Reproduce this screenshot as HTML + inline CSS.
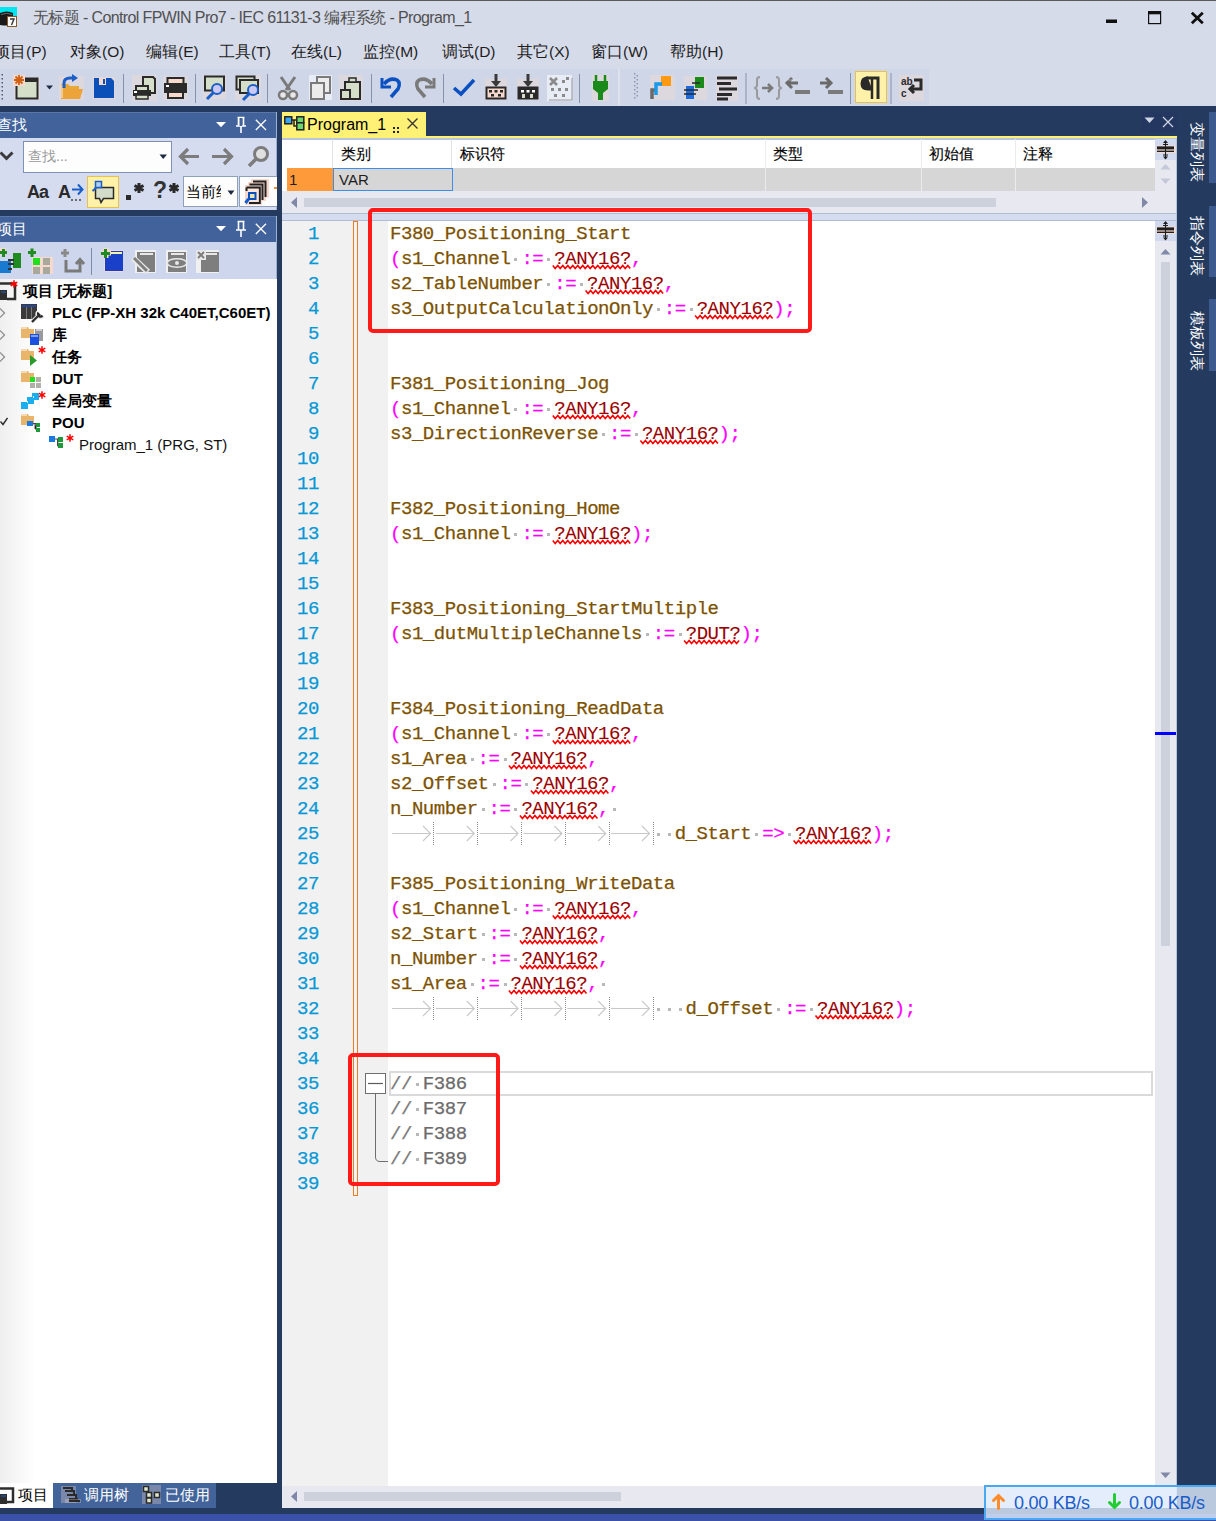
<!DOCTYPE html>
<html><head><meta charset="utf-8">
<style>
*{margin:0;padding:0;box-sizing:border-box}
html,body{width:1216px;height:1521px;overflow:hidden;background:#243a5e;font-family:"Liberation Sans",sans-serif;}
.a{position:absolute}
.ui{font-size:15px;color:#1e1e1e;white-space:nowrap;line-height:1}
.mn{font-size:15.5px;margin-top:1px}
.hd{color:#000;-webkit-text-stroke:0.15px #000}
#title{left:0;top:0;width:1216px;height:69px;background:#d6dbe9}
#tb{left:0;top:69px;width:1216px;height:37px;background:#d6dbe9}
.b{font-weight:bold;color:#000}
.tbar{background:#cfd6e8}
.sep{width:1px;background:#8a96b0}
.code{left:390px;font-family:"Liberation Mono",monospace;font-size:19px;letter-spacing:-0.45px;-webkit-text-stroke:0.25px currentColor;white-space:pre;line-height:25px;height:25px}
.id{color:#7d5200}.op{color:#ff00ff}.ph{color:#9a0000;-webkit-text-stroke:0.1px currentColor}
.ws{display:inline-block;width:10.95px;height:25px;vertical-align:top;position:relative;color:transparent}
.ws:after{content:"";position:absolute;left:4px;top:11px;width:3px;height:3px;background:#b8b8b8}
.tab{display:inline-block;width:43.8px;height:25px;vertical-align:top}
.cm{color:#7a7a7a}.cg{color:#6b6b6b}
.vt{font-size:15px;color:#fff;line-height:15px;white-space:nowrap;transform-origin:0 0;transform:rotate(90deg)}
.lnum{left:283px;width:36px;text-align:right;font-family:"Liberation Mono",monospace;font-size:19px;letter-spacing:-0.45px;-webkit-text-stroke:0.25px currentColor;line-height:25px;color:#0898d6}
</style></head><body>
<!-- title bar -->
<div id="title" class="a"></div>
<div class="a" style="left:0;top:0;width:1216px;height:1px;background:#5a5a5a"></div>
<div class="a ui" style="left:33px;top:10px;font-size:16px;color:#505050;letter-spacing:-0.62px">无标题 - Control FPWIN Pro7 - IEC 61131-3 编程系统 - Program_1</div>
<!-- menu -->
<div class="a ui mn" style="left:-6px;top:43px">项目(P)</div>
<div class="a ui mn" style="left:70px;top:43px">对象(O)</div>
<div class="a ui mn" style="left:146px;top:43px">编辑(E)</div>
<div class="a ui mn" style="left:219px;top:43px">工具(T)</div>
<div class="a ui mn" style="left:291px;top:43px">在线(L)</div>
<div class="a ui mn" style="left:363px;top:43px">监控(M)</div>
<div class="a ui mn" style="left:442px;top:43px">调试(D)</div>
<div class="a ui mn" style="left:517px;top:43px">其它(X)</div>
<div class="a ui mn" style="left:591px;top:43px">窗口(W)</div>
<div class="a ui mn" style="left:670px;top:43px">帮助(H)</div>
<!-- toolbar -->
<div id="tb" class="a"></div>
<div class="a tbar" style="left:0;top:69px;width:618px;height:36px"></div>
<div class="a tbar" style="left:620px;top:69px;width:309px;height:36px"></div>


<!-- toolbar icons -->
<svg class="a" style="left:0;top:69px" width="930" height="37">
<g fill="#4a5a7a">
<rect x="1.5" y="5" width="1.5" height="1.5"/><rect x="1.5" y="9" width="1.5" height="1.5"/><rect x="1.5" y="13" width="1.5" height="1.5"/><rect x="1.5" y="17" width="1.5" height="1.5"/><rect x="1.5" y="21" width="1.5" height="1.5"/><rect x="1.5" y="25" width="1.5" height="1.5"/><rect x="1.5" y="29" width="1.5" height="1.5"/>
</g>
<!-- new -->
<rect x="14" y="8" width="26" height="23" fill="#f6d9cc" opacity="0.35"/>
<rect x="16.5" y="9.5" width="21" height="20" fill="#d4dec8" stroke="#2a2a2a" stroke-width="2"/>
<rect x="24" y="9" width="14" height="4" fill="#2a2a2a"/>
<rect x="13" y="6" width="12" height="11" fill="#f6d9cc"/>
<path d="M19 6V16M14 11H24M15.5 7.5L22.5 14.5M22.5 7.5L15.5 14.5" stroke="#d06010" stroke-width="1.8"/>
<path d="M46 16.5H53L49.5 20.5Z" fill="#1e2a44"/>
<!-- open -->
<rect x="59" y="7" width="25" height="24" fill="#f6d9cc" opacity="0.35"/>
<path d="M61 15H68L70 17H79V30H61Z" fill="#e8a838"/>
<path d="M61 20H83L80 30H61Z" fill="#eba33a"/>
<path d="M62 16V29" stroke="#f8d8a8" stroke-width="1.5"/>
<path d="M64 19V14Q64 9 70 9H74" stroke="#1a5fc8" stroke-width="3" fill="none"/>
<path d="M72 5L78 9L72 13Z" fill="#1a5fc8"/>
<!-- save -->
<rect x="93" y="8" width="22" height="22" fill="#f6d9cc" opacity="0.35"/>
<path d="M94 9H111L114 12V29H94Z" fill="#0a50b8"/>
<rect x="99" y="9" width="7" height="7" fill="#f6d9cc"/><rect x="103" y="10" width="2" height="5" fill="#0a50b8"/>
<!-- sep -->
<path d="M123.5 5V34" stroke="#8592ad" stroke-width="1"/>
<!-- print preview -->
<rect x="132" y="6" width="25" height="26" fill="#f6d9cc" opacity="0.35"/>
<path d="M143 8H153L155 10V24H143Z" fill="#d4dec8" stroke="#2a2a2a" stroke-width="2"/>
<rect x="136" y="17" width="12" height="6" fill="#d4dec8" stroke="#2a2a2a" stroke-width="2"/>
<rect x="133" y="21" width="18" height="6" fill="#2a2a2a"/><rect x="134" y="22" width="3" height="2" fill="#fff"/>
<rect x="136" y="26" width="12" height="4" fill="#d4dec8" stroke="#2a2a2a" stroke-width="1.5"/>
<!-- print -->
<rect x="163" y="7" width="25" height="24" fill="#f6d9cc" opacity="0.35"/>
<rect x="167.5" y="9" width="16" height="6" fill="#f6d9cc" stroke="#2a2a2a" stroke-width="2"/>
<rect x="164" y="14" width="23" height="10" fill="#2a2a2a"/><rect x="166" y="16" width="3" height="2" fill="#fff"/>
<rect x="168" y="23" width="15" height="6" fill="#f6d9cc" stroke="#2a2a2a" stroke-width="2"/>
<path d="M195.5 5V34" stroke="#8592ad" stroke-width="1"/>
<!-- find -->
<rect x="203" y="6" width="23" height="24" fill="#f6d9cc" opacity="0.35"/>
<rect x="205" y="7.5" width="19" height="14" fill="#d4dec8" stroke="#2a2a2a" stroke-width="2"/>
<circle cx="217" cy="20" r="5" fill="#ccc8f4" stroke="#1a5fc8" stroke-width="2"/>
<path d="M213.5 23.5L207 30" stroke="#1a5fc8" stroke-width="3"/>
<!-- find multi -->
<rect x="235" y="6" width="26" height="25" fill="#f6d9cc" opacity="0.35"/>
<rect x="236.5" y="7.5" width="18" height="13" fill="#d4dec8" stroke="#2a2a2a" stroke-width="2"/>
<rect x="240" y="11" width="18" height="13" fill="#d4dec8" stroke="#2a2a2a" stroke-width="2"/>
<circle cx="253" cy="21" r="5" fill="#ccc8f4" stroke="#1a5fc8" stroke-width="2"/>
<path d="M249.5 24.5L243 31" stroke="#1a5fc8" stroke-width="3"/>
<path d="M267.5 5V34" stroke="#8592ad" stroke-width="1"/>
<!-- cut -->
<path d="M281 8L290 21M295 8L286 21" stroke="#7a7a7a" stroke-width="3"/>
<circle cx="283" cy="26" r="4" fill="#e8e8e8" stroke="#7a7a7a" stroke-width="2.5"/>
<circle cx="293" cy="26" r="4" fill="#e8e8e8" stroke="#7a7a7a" stroke-width="2.5"/>
<!-- copy -->
<rect x="309" y="6" width="23" height="25" fill="#e8ecf4"/>
<rect x="317" y="8" width="13" height="16" fill="#ececec" stroke="#7a7a7a" stroke-width="2"/>
<rect x="311" y="14" width="13" height="16" fill="#ececec" stroke="#7a7a7a" stroke-width="2"/>
<!-- paste -->
<rect x="339" y="6" width="24" height="26" fill="#f6d9cc" opacity="0.35"/>
<rect x="345" y="13" width="15" height="17" fill="#d4dec8" stroke="#2a2a2a" stroke-width="2"/>
<rect x="349" y="9" width="7" height="4" fill="#d4dec8" stroke="#2a2a2a" stroke-width="1.5"/>
<rect x="341" y="21" width="9" height="9" fill="#d4dec8" stroke="#2a2a2a" stroke-width="2"/>
<path d="M371.5 5V34" stroke="#8592ad" stroke-width="1"/>
<!-- undo -->
<path d="M384 15Q390 8 397 11Q401 14 398 20L391 28" stroke="#0a50c0" stroke-width="3.5" fill="none"/>
<path d="M382 9V18H391" stroke="#0a50c0" stroke-width="3" fill="none"/>
<!-- redo -->
<path d="M432 15Q426 8 419 11Q415 14 418 20L425 28" stroke="#7a7a7a" stroke-width="3.5" fill="none"/>
<path d="M434 9V18H425" stroke="#7a7a7a" stroke-width="3" fill="none"/>
<path d="M443.5 5V34" stroke="#8592ad" stroke-width="1"/>
<!-- check -->
<path d="M454 19L461 25L474 11" stroke="#0a50c0" stroke-width="3.5" fill="none"/>
<!-- download -->
<rect x="485" y="10" width="22" height="21" fill="#f6d9cc" opacity="0.35"/>
<rect x="486.5" y="18.5" width="19" height="11" fill="#f6d9cc" stroke="#2a2a2a" stroke-width="2"/>
<path d="M496 5V14" stroke="#3a3a3a" stroke-width="3"/><path d="M491 12H501L496 18Z" fill="#3a3a3a"/>
<rect x="489" y="21" width="3" height="2.5" fill="#2a2a2a"/><rect x="494.5" y="21" width="3" height="2.5" fill="#2a2a2a"/><rect x="500" y="21" width="3" height="2.5" fill="#2a2a2a"/>
<rect x="491" y="25" width="3" height="2.5" fill="#2a2a2a"/><rect x="498" y="25" width="3" height="2.5" fill="#2a2a2a"/>
<!-- download2 -->
<rect x="517" y="10" width="22" height="21" fill="#f6d9cc" opacity="0.35"/>
<rect x="518.5" y="18.5" width="19" height="11" fill="#2a2a2a" stroke="#2a2a2a" stroke-width="2"/>
<path d="M528 5V14" stroke="#3a3a3a" stroke-width="3"/><path d="M523 12H533L528 18Z" fill="#3a3a3a"/>
<rect x="521" y="21" width="3" height="2.5" fill="#fff"/><rect x="526.5" y="21" width="3" height="2.5" fill="#fff"/><rect x="532" y="21" width="3" height="2.5" fill="#fff"/>
<rect x="522" y="25" width="3" height="4" fill="#d4dec8"/><rect x="530" y="25" width="3" height="4" fill="#d4dec8"/>
<!-- grid -->
<rect x="547" y="6" width="25" height="26" fill="#e8ecf4"/>
<path d="M550 9L557 16M557 9L550 16" stroke="#8a8a8a" stroke-width="2.5"/>
<g fill="#8a8a8a"><rect x="562" y="11" width="3" height="3"/><rect x="566" y="8" width="3" height="3"/><rect x="551" y="19" width="3" height="3"/><rect x="558" y="19" width="3" height="3"/><rect x="565" y="19" width="3" height="3"/><rect x="554" y="25" width="3" height="3"/><rect x="562" y="25" width="3" height="3"/></g>
<path d="M549 31H572V9" stroke="#9a9a9a" stroke-width="1" fill="none"/>
<path d="M579.5 5V34" stroke="#8592ad" stroke-width="1"/>
<!-- plug -->
<rect x="592" y="6" width="17" height="26" fill="#f6d9cc" opacity="0.35"/>
<path d="M596 6V12M605 6V12" stroke="#1a8a1a" stroke-width="2.5"/>
<path d="M593 12H608V20L603 24V31H598V24L593 20Z" fill="#1a8a1a"/>
</svg>
<div class="a" style="left:618px;top:69px;width:2px;height:36px;background:#dde2ef"></div>
<svg class="a" style="left:620px;top:69px" width="310" height="37">
<g fill="#8a96b0"><rect x="14" y="4" width="1.5" height="1.5"/><rect x="14" y="8" width="1.5" height="1.5"/><rect x="14" y="12" width="1.5" height="1.5"/><rect x="14" y="16" width="1.5" height="1.5"/><rect x="14" y="20" width="1.5" height="1.5"/><rect x="14" y="24" width="1.5" height="1.5"/><rect x="14" y="28" width="1.5" height="1.5"/>
<rect x="16.5" y="6" width="1.5" height="1.5"/><rect x="16.5" y="10" width="1.5" height="1.5"/><rect x="16.5" y="14" width="1.5" height="1.5"/><rect x="16.5" y="18" width="1.5" height="1.5"/><rect x="16.5" y="22" width="1.5" height="1.5"/><rect x="16.5" y="26" width="1.5" height="1.5"/></g>
<!-- icon 27 -->
<rect x="30" y="6" width="25" height="25" fill="#f6d9cc" opacity="0.35"/>
<rect x="41" y="7" width="10" height="10" fill="#ff9a10"/>
<path d="M32 30V21H37" stroke="#6a6a6a" stroke-width="3.5" fill="none"/>
<path d="M36 26V15H42" stroke="#1a9ae8" stroke-width="3.5" fill="none"/>
<!-- icon 28 -->
<rect x="64" y="7" width="23" height="24" fill="#f6d9cc" opacity="0.35"/>
<rect x="75" y="8" width="9" height="11" fill="#1a8a1a"/>
<rect x="66" y="17" width="8" height="13" fill="#1a6ae0"/>
<path d="M64 21H78M64 25H76M72 14H80" stroke="#2a2a2a" stroke-width="1.5"/>
<!-- icon 29 -->
<rect x="96" y="6" width="22" height="26" fill="#f6d9cc" opacity="0.35"/>
<path d="M97 9H117M97 14.5H111M99 20H117M97 25.5H112M97 30H108" stroke="#2a2a2a" stroke-width="3"/>
<path d="M126 4V35" stroke="#8592ad" stroke-width="1"/>
<!-- {→} -->
<path d="M140 8Q137 8 137 11V17L135 19L137 21V27Q137 30 140 30" stroke="#9a9a9a" stroke-width="2" fill="none"/>
<path d="M156 8Q159 8 159 11V17L161 19L159 21V27Q159 30 156 30" stroke="#9a9a9a" stroke-width="2" fill="none"/>
<path d="M142 19H151M148 15L152 19L148 23" stroke="#7a7a7a" stroke-width="2.5" fill="none"/>
<!-- ←_ -->
<path d="M167 14H178M172 9L167 14L172 19" stroke="#6a6a6a" stroke-width="3" fill="none"/>
<rect x="175" y="21" width="15" height="4" fill="#7a7a7a"/>
<path d="M168 11H180" stroke="#e8e8e8" stroke-width="1" opacity="0.5"/>
<!-- →_ -->
<path d="M200 14H211M206 9L211 14L206 19" stroke="#6a6a6a" stroke-width="3" fill="none"/>
<rect x="208" y="21" width="15" height="4" fill="#7a7a7a"/>
<path d="M230.5 4V35" stroke="#8592ad" stroke-width="1"/>
<!-- ¶ highlighted -->
<rect x="235.5" y="2.5" width="31" height="31" fill="#fff2a8" stroke="#e9c14f" stroke-width="1"/>
<path d="M246 9H258V30" stroke="#2a2a2a" stroke-width="3" fill="none"/>
<path d="M252 9V30" stroke="#2a2a2a" stroke-width="2.5"/>
<path d="M248 9Q242 9 242 14.5Q242 20 248 20H252" fill="#2a2a2a" stroke="#2a2a2a" stroke-width="3"/>
<path d="M271 4V35" stroke="#8592ad" stroke-width="1"/>
<!-- abc -->
<rect x="279" y="6" width="25" height="26" fill="#f6d9cc" opacity="0.35"/>
<text x="281" y="16" font-family="Liberation Sans" font-weight="bold" font-size="10" fill="#2a2a2a">ab</text>
<text x="281" y="28" font-family="Liberation Sans" font-weight="bold" font-size="10" fill="#2a2a2a">c</text>
<path d="M294 11H301V20H290M294 16L290 20L294 24" stroke="#2a2a2a" stroke-width="3" fill="none"/>
</svg>
<!-- left panel: find -->
<div class="a" style="left:0;top:112px;width:277px;height:26px;background:#41629a"></div>
<div class="a" style="left:0;top:112px;width:277px;height:1px;background:#5a77a8"></div>
<div class="a ui" style="left:-3px;top:117px;color:#fff">查找</div>
<svg class="a" style="left:214px;top:120px" width="14" height="10"><path d="M2 2H12L7 7.2Z" fill="#fff"/></svg>
<svg class="a" style="left:234px;top:116px" width="14" height="18"><path d="M3.5 1.5H10.5M4.5 1.5V9.5M9.5 1.5V9.5M2 10H12M7 10V17" stroke="#fff" stroke-width="1.6" fill="none"/><rect x="5" y="2" width="3" height="8" fill="#41629a"/><path d="M5 2V10" stroke="#fff" stroke-width="1"/></svg>
<svg class="a" style="left:255px;top:119px" width="12" height="12"><path d="M0.8 0.8L11 11M11 0.8L0.8 11" stroke="#fff" stroke-width="1.3"/></svg>
<div class="a" style="left:0;top:138px;width:277px;height:72px;background:#d5dcf0"></div>
<div class="a" style="left:276px;top:112px;width:1px;height:98px;background:#9db0d0"></div>
<svg class="a" style="left:0;top:150px" width="14" height="12"><path d="M0.5 2.5L6.5 8.5L12.5 2.5" stroke="#3a3a3a" stroke-width="3" fill="none"/></svg>
<div class="a" style="left:23px;top:141px;width:149px;height:32px;background:#fdfdfd;border:1px solid #7f92b2"></div>
<div class="a ui" style="left:28px;top:149px;color:#9a9a9a;font-size:14px">查找...</div>
<svg class="a" style="left:159px;top:154px" width="9" height="6"><path d="M0.5 0.5H8L4.2 5Z" fill="#1e2a44"/></svg>
<svg class="a" style="left:176px;top:146px" width="26" height="22"><path d="M23 10.5H5M12 3L4.5 10.5L12 18" stroke="#7c7c7c" stroke-width="3.2" fill="none"/></svg>
<svg class="a" style="left:210px;top:146px" width="26" height="22"><path d="M2 10.5H21M14 3L21.5 10.5L14 18" stroke="#7c7c7c" stroke-width="3.2" fill="none"/></svg>
<svg class="a" style="left:246px;top:145px" width="25" height="24"><circle cx="15" cy="9" r="6.5" stroke="#7c7c7c" stroke-width="3" fill="#e0e0e0"/><path d="M10 14L3 21" stroke="#7c7c7c" stroke-width="3.5"/></svg>
<!-- row2 -->
<div class="a" style="left:27px;top:183px;font:bold 18px 'Liberation Sans',sans-serif;color:#2a2a2a;letter-spacing:-1px;line-height:1">Aa</div>
<div class="a" style="left:58px;top:183px;font:bold 18px 'Liberation Sans',sans-serif;color:#2a2a2a;line-height:1">A</div>
<svg class="a" style="left:70px;top:181px" width="16" height="22"><path d="M2 8.5H12M8 3.5L12.5 8.5L8 13.5" stroke="#1a5fc8" stroke-width="2" fill="none"/><path d="M1 19H3M5 19H7M9 19H11" stroke="#444" stroke-width="1.5"/></svg>
<div class="a" style="left:87px;top:176px;width:32px;height:32px;background:#fff2a8;border:1px solid #e9c14f"></div>
<svg class="a" style="left:91px;top:180px" width="26" height="25"><path d="M4.5 7.5H22.5V18.5H12.5L10 22.5L8.5 18.5H4.5Z" fill="#d3dcc8" stroke="#2a2a2a" stroke-width="1.5"/><rect x="4.5" y="1.5" width="6" height="6" fill="#b0d0f0" stroke="#1a5fc8" stroke-width="1.5"/><path d="M5 8L1.5 11" stroke="#1a5fc8" stroke-width="2"/></svg>
<svg class="a" style="left:124px;top:180px" width="24" height="24"><rect x="2" y="15" width="5" height="5" fill="#2a2a2a"/><path d="M15 3V13M10.5 5.5L19.5 10.5M19.5 5.5L10.5 10.5" stroke="#2a2a2a" stroke-width="3"/></svg>
<div class="a" style="left:153px;top:179px;font:bold 23px 'Liberation Sans',sans-serif;color:#333;line-height:1">?</div>
<svg class="a" style="left:165px;top:180px" width="20" height="20"><path d="M9 3V13M4.5 5.5L13.5 10.5M13.5 5.5L4.5 10.5" stroke="#2a2a2a" stroke-width="3"/></svg>
<div class="a" style="left:183px;top:176px;width:55px;height:31px;background:#fdfdfd;border:1px solid #8fa0bd;overflow:hidden"><div class="ui" style="position:absolute;left:2px;top:7px;color:#000;font-size:15px">当前组</div><div style="position:absolute;left:37px;top:0;width:17px;height:29px;background:#fdfdfd"></div></div>
<svg class="a" style="left:227px;top:190px" width="8" height="6"><path d="M0.5 0.5H7.5L4 5Z" fill="#1e2a44"/></svg>
<div class="a" style="left:239px;top:176px;width:38px;height:31px;background:#fdfdfd;border:1px solid #8fa0bd;border-right:none"></div>
<svg class="a" style="left:243px;top:178px" width="28" height="28">
<rect x="8" y="1" width="18" height="18.5" fill="#f6d9cc"/><rect x="5" y="4" width="18" height="19" fill="#f6d9cc"/><rect x="2" y="7" width="17" height="20" fill="#f6d9cc"/>
<path d="M10 3.5H22.5V19" stroke="#222" stroke-width="2" fill="none"/>
<path d="M6.5 6.5H19.5V22" stroke="#222" stroke-width="2" fill="none"/>
<path d="M3.5 9.5H16.8V25H6" stroke="#222" stroke-width="2" fill="none"/><path d="M3.5 9.5V13" stroke="#222" stroke-width="2"/>
<rect x="5" y="11" width="10.5" height="13" fill="#fbe6dc"/>
<rect x="6" y="15" width="6.5" height="6" fill="#e4e8b0" stroke="#0a4fc0" stroke-width="2"/>
<path d="M5.5 21L2.5 25" stroke="#0a5fd0" stroke-width="3"/>
</svg>
<div class="a" style="left:274px;top:187px;width:3px;height:2px;background:#f0902a"></div>

<!-- left panel: project -->
<div class="a" style="left:0;top:216px;width:277px;height:26px;background:#41629a"></div>
<div class="a" style="left:0;top:216px;width:277px;height:1px;background:#5a77a8"></div>
<div class="a ui" style="left:-3px;top:221px;color:#fff">项目</div>
<svg class="a" style="left:214px;top:224px" width="14" height="10"><path d="M2 2H12L7 7.2Z" fill="#fff"/></svg>
<svg class="a" style="left:234px;top:220px" width="14" height="18"><path d="M3.5 1.5H10.5M4.5 1.5V9.5M9.5 1.5V9.5M2 10H12M7 10V17" stroke="#fff" stroke-width="1.6" fill="none"/></svg>
<svg class="a" style="left:255px;top:223px" width="12" height="12"><path d="M0.8 0.8L11 11M11 0.8L0.8 11" stroke="#fff" stroke-width="1.3"/></svg>
<div class="a" style="left:0;top:242px;width:277px;height:37px;background:#cdd6ec"></div>
<div class="a" style="left:276px;top:216px;width:1px;height:63px;background:#9db0d0"></div>
<svg class="a" style="left:0;top:248px" width="222" height="27">
 <!-- 1 -->
 <path d="M0 3H6M3 0V7" stroke="#f6d9cc" stroke-width="5"/>
 <path d="M0 4.5H7M3.5 1V9" stroke="#1f8a1f" stroke-width="3"/>
 <rect x="0" y="13" width="11" height="12" fill="#1a7ad0"/><rect x="13" y="5" width="8" height="15" fill="#1f8a1f"/>
 <path d="M8 12H14M8 16H14M8 21H12" stroke="#333" stroke-width="2"/>
 <!-- 2 -->
 <path d="M28 4.5H36M32 0.5V9" stroke="#1f8a1f" stroke-width="3"/>
 <rect x="32" y="9" width="21" height="17" fill="#f6d9cc"/>
 <rect x="33" y="10" width="7" height="7" fill="#1fe01f"/><rect x="43" y="10" width="7" height="7" fill="#a8a89c"/><rect x="33" y="19" width="7" height="7" fill="#a8a89c"/><rect x="43" y="19" width="7" height="7" fill="#a8a89c"/>
 <!-- 3 -->
 <path d="M61 5H69M65 1V9" stroke="#8a8a8a" stroke-width="3"/>
 <path d="M66 12V23H80V13M76 16L80 11.5L84 16" stroke="#7a7a7a" stroke-width="3" fill="none"/>
 <!-- sep -->
 <path d="M91.5 0V27" stroke="#7d8aa6" stroke-width="1"/>
 <!-- 4 -->
 <rect x="104" y="2" width="19" height="22" fill="#f6d9cc"/>
 <rect x="105" y="3" width="18" height="20" fill="#1a3fc8"/><path d="M110 5H122" stroke="#f0f0b0" stroke-width="2"/>
 <path d="M101 5H111M106 0V10" stroke="#f6d9cc" stroke-width="5"/>
 <path d="M101 5.5H110M105.5 1V10" stroke="#1f8a1f" stroke-width="3"/>
 <!-- 5 -->
 <rect x="135" y="2" width="21" height="23" fill="#f0f0f0"/><rect x="137" y="4" width="18" height="20" fill="#7e7e7e"/><path d="M140 6H153" stroke="#e8e8e8" stroke-width="2"/>
 <path d="M133 10L148 24" stroke="#e8e8e8" stroke-width="6"/><path d="M134 10L147 23" stroke="#7e7e7e" stroke-width="3"/>
 <!-- 6 -->
 <rect x="166" y="2" width="21" height="23" fill="#f0f0f0"/><rect x="168" y="4" width="18" height="20" fill="#7e7e7e"/><path d="M171 6H184" stroke="#e8e8e8" stroke-width="2"/>
 <ellipse cx="177" cy="15" rx="11" ry="5" fill="#e8e8e8"/><ellipse cx="177" cy="15" rx="9" ry="3.5" fill="#7e7e7e"/><circle cx="177" cy="15" r="2" fill="#e8e8e8"/>
 <!-- 7 -->
 <rect x="196" y="2" width="23" height="23" fill="#f0f0f0"/><rect x="201" y="4" width="18" height="20" fill="#7e7e7e"/><path d="M204 6H217" stroke="#e8e8e8" stroke-width="2"/>
 <rect x="196" y="2" width="10" height="10" fill="#e8e8e8"/><path d="M198 4L204 10M204 4L198 10" stroke="#7e7e7e" stroke-width="2"/>
</svg>
<div class="a" style="left:0;top:279px;width:277px;height:1204px;background:#fff"></div>
<div class="a" style="left:0;top:279px;width:36px;height:1204px;background:linear-gradient(90deg,#efefef,#fff)"></div>
<div class="a" style="left:276px;top:279px;width:1px;height:1204px;background:#fff"></div>
<!-- tree -->
<svg class="a" style="left:0;top:281px" width="20" height="20"><path d="M0 2.5H15V18H7" stroke="#2e2e2e" stroke-width="2.5" fill="none"/><rect x="0" y="9" width="7" height="10" fill="#2e2e2e"/><path d="M1 11H6" stroke="#1a5fc8" stroke-width="1"/></svg>
<!-- asterisks --><svg class="a" style="left:9px;top:279px" width="10" height="10"><path d="M5 1.2V8.8M1.7 3.1L8.3 6.9M8.3 3.1L1.7 6.9" stroke="#ff0000" stroke-width="1.5"/></svg><svg class="a" style="left:37px;top:345px" width="10" height="10"><path d="M5 1.2V8.8M1.7 3.1L8.3 6.9M8.3 3.1L1.7 6.9" stroke="#ff0000" stroke-width="1.5"/></svg><svg class="a" style="left:37px;top:390px" width="10" height="10"><path d="M5 1.2V8.8M1.7 3.1L8.3 6.9M8.3 3.1L1.7 6.9" stroke="#ff0000" stroke-width="1.5"/></svg><svg class="a" style="left:65px;top:433px" width="10" height="10"><path d="M5 1.2V8.8M1.7 3.1L8.3 6.9M8.3 3.1L1.7 6.9" stroke="#ff0000" stroke-width="1.5"/></svg>
<div class="a ui b" style="left:23px;top:283px">项目 [无标题]</div>
<svg class="a" style="left:0;top:307px" width="6" height="12"><path d="M0 1.5L4.5 6L0 10.5" stroke="#8a8a8a" stroke-width="1.2" fill="none"/></svg>
<svg class="a" style="left:0;top:329px" width="6" height="12"><path d="M0 1.5L4.5 6L0 10.5" stroke="#8a8a8a" stroke-width="1.2" fill="none"/></svg>
<svg class="a" style="left:0;top:351px" width="6" height="12"><path d="M0 1.5L4.5 6L0 10.5" stroke="#8a8a8a" stroke-width="1.2" fill="none"/></svg>
<svg class="a" style="left:0;top:415px" width="8" height="12"><path d="M0.5 6.5L3 9.5L7.5 3" stroke="#2a2a2a" stroke-width="1.4" fill="none"/></svg>
<!-- PLC icon -->
<svg class="a" style="left:21px;top:304px" width="24" height="19"><rect x="0" y="0" width="16" height="15" fill="#3a3a3a"/><path d="M1 2H15" stroke="#1a4fe0" stroke-width="1.2"/><path d="M5.5 3V15M10.5 3V15" stroke="#7a7a7a" stroke-width="1"/><path d="M11 18L19 10M17 8A3 3 0 1 0 22 12" stroke="#e8e8e8" stroke-width="4" fill="none"/><path d="M11 18L19 10M17.5 8.5A2.5 2.5 0 1 0 21.5 11.5" stroke="#2a2a2a" stroke-width="2.2" fill="none"/></svg>
<div class="a ui b" style="left:52px;top:305px">PLC (FP-XH 32k C40ET,C60ET)</div>
<!-- lib icon -->
<svg class="a" style="left:21px;top:326px" width="24" height="19"><path d="M0 1H7L8 3H13V12H0Z" fill="#e8b56a"/><path d="M0 2H6" stroke="#fff" stroke-width="1"/><rect x="14" y="3" width="8" height="12" fill="#9a9a9a"/><path d="M15 4H21" stroke="#e0e0e0" stroke-width="1.5"/><rect x="9" y="8" width="9" height="11" fill="#1a4fe0"/><path d="M10 10H17" stroke="#c8d4f8" stroke-width="1.2"/></svg>
<div class="a ui b" style="left:52px;top:327px">库</div>
<!-- task icon -->
<svg class="a" style="left:21px;top:348px" width="26" height="20"><path d="M0 1H7L8 3H13V12H0Z" fill="#e8b56a"/><path d="M0 2H6" stroke="#fff" stroke-width="1"/><path d="M9 7L16 12.5L9 18Z" fill="#2a9a2a"/></svg>
<div class="a ui b" style="left:52px;top:349px">任务</div>
<!-- DUT icon -->
<svg class="a" style="left:21px;top:370px" width="24" height="19"><path d="M0 1H7L8 3H13V12H0Z" fill="#e8b56a"/><path d="M0 2H6" stroke="#fff" stroke-width="1"/><rect x="9" y="7" width="5" height="5" fill="#1fe01f"/><rect x="15" y="7" width="5" height="5" fill="#b0b0a8"/><rect x="9" y="13" width="5" height="5" fill="#b0b0a8"/><rect x="15" y="13" width="5" height="5" fill="#b0b0a8"/></svg>
<div class="a ui b" style="left:52px;top:371px">DUT</div>
<!-- global var icon -->
<svg class="a" style="left:21px;top:391px" width="26" height="20"><rect x="0" y="11" width="7" height="7" fill="#1aaef0"/><rect x="6" y="6" width="7" height="7" fill="#1aaef0"/><rect x="11" y="2" width="7" height="7" fill="#1aaef0"/><path d="M6 11H7M12 6H13" stroke="#fff" stroke-width="1.5"/></svg>
<div class="a ui b" style="left:52px;top:393px">全局变量</div>
<!-- POU icon -->
<svg class="a" style="left:21px;top:413px" width="24" height="19"><path d="M0 1H7L8 3H13V12H0Z" fill="#e8b56a"/><path d="M0 2H6" stroke="#fff" stroke-width="1"/><rect x="6" y="8" width="6" height="5" fill="#1a7ae0"/><path d="M12 10.5H15M14 10.5V16H16" stroke="#444" stroke-width="1"/><rect x="15" y="10" width="4" height="4" fill="#1f9a3a"/><rect x="15" y="15" width="4" height="4" fill="#1f9a3a"/></svg>
<div class="a ui b" style="left:52px;top:415px">POU</div>
<!-- Program icon -->
<svg class="a" style="left:49px;top:434px" width="26" height="20"><rect x="0" y="2" width="6" height="6" fill="#1a7ae0"/><path d="M6 5H9M8.5 5V12H10" stroke="#444" stroke-width="1"/><rect x="9" y="3" width="5" height="5" fill="#1f9a3a"/><rect x="9" y="9" width="5" height="5" fill="#1f9a3a"/></svg>
<div class="a ui" style="left:79px;top:437px;color:#111">Program_1 (PRG, ST)</div>

<!-- bottom tabs -->
<div class="a" style="left:0;top:1483px;width:53px;height:25px;background:#fff"></div>
<div class="a" style="left:53px;top:1483px;width:163px;height:25px;background:#43649b"></div>
<div class="a" style="left:0;top:1514px;width:1216px;height:7px;background:#3b50a8"></div>



<!-- title icon & controls -->
<svg class="a" style="left:0;top:7px" width="18" height="21"><rect x="0" y="0" width="17" height="9" fill="#00e5ee"/><rect x="13" y="0" width="4" height="19" fill="#00e5ee"/><path d="M0 6Q7 3 13 6V18Q7 19 0 18Z" fill="#1a1a1a"/><path d="M1 7.5Q7 5 12 7.5" stroke="#6a6a6a" stroke-width="1" fill="none"/><rect x="7.5" y="9.5" width="9" height="10" fill="#fafafa" stroke="#8a5a2a" stroke-width="1"/><path d="M10 12H14L11.5 18" stroke="#333" stroke-width="1.4" fill="none"/></svg>
<svg class="a" style="left:1106px;top:19px" width="12" height="5"><rect x="0" y="0.5" width="11" height="3.5" fill="#111"/></svg>
<svg class="a" style="left:1148px;top:11px" width="14" height="14"><rect x="0.6" y="0.6" width="12" height="12" fill="none" stroke="#111" stroke-width="1.2"/><rect x="0" y="0" width="13" height="3.3" fill="#111"/></svg>
<svg class="a" style="left:1190px;top:11px" width="15" height="14"><path d="M1.8 1.8L12.8 12.3M12.8 1.8L1.8 12.3" stroke="#111" stroke-width="2.8"/></svg>

<!-- bottom tabs content -->
<svg class="a" style="left:0;top:1486px" width="16" height="18"><path d="M0 2.5H13V16H7" stroke="#2e2e2e" stroke-width="2.5" fill="none"/><rect x="0" y="8" width="7" height="10" fill="#2e2e2e"/><path d="M1 10H6" stroke="#1a5fc8" stroke-width="1"/></svg>
<div class="a ui" style="left:18px;top:1487px;color:#000">项目</div>
<svg class="a" style="left:61px;top:1486px" width="22" height="18"><rect x="0" y="0" width="15" height="17" fill="#f6d9cc" opacity="0.3"/><path d="M2 2H11V5M4 5H13V9M6 9H15V12M8 13H17" stroke="#2a2a2a" stroke-width="2" fill="none"/><rect x="4" y="13" width="16" height="4" fill="#f6d9cc" opacity="0.3"/><path d="M8 15H19" stroke="#2a2a2a" stroke-width="2"/></svg>
<div class="a ui" style="left:84px;top:1487px;color:#fff">调用树</div>
<svg class="a" style="left:142px;top:1485px" width="20" height="19"><rect x="0" y="0" width="19" height="19" fill="#f6d9cc" opacity="0.3"/><rect x="1.5" y="1.5" width="5" height="5" fill="#e0e8d0" stroke="#2a2a2a" stroke-width="1.5"/><rect x="4.5" y="7.5" width="5" height="5" fill="#e0e8d0" stroke="#2a2a2a" stroke-width="1.5"/><rect x="12.5" y="7.5" width="5" height="5" fill="#e0e8d0" stroke="#2a2a2a" stroke-width="1.5"/><rect x="4.5" y="13" width="5" height="5" fill="#e0e8d0" stroke="#2a2a2a" stroke-width="1.5"/></svg>
<div class="a ui" style="left:165px;top:1487px;color:#fff">已使用</div>
<!-- ===== EDITOR ===== -->
<div class="a" style="left:282px;top:112px;width:144px;height:26px;background:#fff176"></div>
<div class="a" style="left:282px;top:136px;width:895px;height:2px;background:#fff176"></div>
<div class="a" style="left:282px;top:138px;width:895px;height:2px;background:#b9c6dc"></div>
<!-- var header grid -->
<div class="a" style="left:282px;top:140px;width:873px;height:28px;background:#fff"></div>
<div class="a" style="left:1155px;top:139px;width:22px;height:21px;background:#d0d9ee"></div>
<div class="a" style="left:1155px;top:160px;width:22px;height:31px;background:#e8e8f0"></div>
<div class="a" style="left:282px;top:168px;width:5px;height:23px;background:#fff"></div>
<div class="a" style="left:287px;top:168px;width:46px;height:23px;background:#ff9a3a"></div>
<div class="a" style="left:333px;top:168px;width:822px;height:23px;background:#d6d6d6"></div>
<div class="a" style="left:333px;top:168px;width:120px;height:23px;border:1px solid #3d8ee8"></div>
<div class="a" style="left:332px;top:139px;width:1px;height:29px;background:#e2e2e2"></div>
<div class="a" style="left:451px;top:139px;width:1px;height:29px;background:#e2e2e2"></div>
<div class="a" style="left:765px;top:139px;width:1px;height:52px;background:#ececec"></div>
<div class="a" style="left:921px;top:139px;width:1px;height:52px;background:#ececec"></div>
<div class="a" style="left:1015px;top:139px;width:1px;height:52px;background:#ececec"></div>
<div class="a ui hd" style="left:341px;top:146px">类别</div>
<div class="a ui hd" style="left:460px;top:146px">标识符</div>
<div class="a ui hd" style="left:773px;top:146px">类型</div>
<div class="a ui hd" style="left:929px;top:146px">初始值</div>
<div class="a ui hd" style="left:1023px;top:146px">注释</div>
<div class="a ui" style="left:289px;top:172px">1</div>
<div class="a ui" style="left:339px;top:172px">VAR</div>
<!-- h scrollbar of grid -->
<div class="a" style="left:282px;top:191px;width:895px;height:22px;background:#e8e8f0"></div>
<div class="a" style="left:304px;top:198px;width:692px;height:9px;background:#cdd1dc"></div>
<!-- separator -->
<div class="a" style="left:282px;top:213px;width:895px;height:1px;background:#b0bdd2"></div>
<div class="a" style="left:282px;top:214px;width:895px;height:6px;background:#d5dcef"></div>
<div class="a" style="left:282px;top:220px;width:895px;height:1px;background:#b0bdd2"></div>
<!-- code area -->
<div class="a" style="left:282px;top:221px;width:895px;height:1265px;background:#fff"></div>
<div class="a" style="left:282px;top:221px;width:106px;height:1265px;background:#f1f1f1"></div>
<div class="a" style="left:1155px;top:221px;width:21px;height:1265px;background:#e8e8f0"></div>
<div class="a" style="left:1155px;top:221px;width:21px;height:20px;background:#d0d9ee"></div>
<div class="a" style="left:1161px;top:262px;width:9px;height:684px;background:#cdd1dc"></div>
<div class="a" style="left:1155px;top:732px;width:21px;height:3px;background:#0000ff"></div>
<!-- orange marker -->
<div class="a" style="left:353px;top:221px;width:5px;height:975px;border:1px solid #f07a1c;background:#eef3f8"></div>
<!-- line numbers -->
<div id="lnums">
<div class="a lnum" style="top:222px">1</div>
<div class="a lnum" style="top:247px">2</div>
<div class="a lnum" style="top:272px">3</div>
<div class="a lnum" style="top:297px">4</div>
<div class="a lnum" style="top:322px">5</div>
<div class="a lnum" style="top:347px">6</div>
<div class="a lnum" style="top:372px">7</div>
<div class="a lnum" style="top:397px">8</div>
<div class="a lnum" style="top:422px">9</div>
<div class="a lnum" style="top:447px">10</div>
<div class="a lnum" style="top:472px">11</div>
<div class="a lnum" style="top:497px">12</div>
<div class="a lnum" style="top:522px">13</div>
<div class="a lnum" style="top:547px">14</div>
<div class="a lnum" style="top:572px">15</div>
<div class="a lnum" style="top:597px">16</div>
<div class="a lnum" style="top:622px">17</div>
<div class="a lnum" style="top:647px">18</div>
<div class="a lnum" style="top:672px">19</div>
<div class="a lnum" style="top:697px">20</div>
<div class="a lnum" style="top:722px">21</div>
<div class="a lnum" style="top:747px">22</div>
<div class="a lnum" style="top:772px">23</div>
<div class="a lnum" style="top:797px">24</div>
<div class="a lnum" style="top:822px">25</div>
<div class="a lnum" style="top:847px">26</div>
<div class="a lnum" style="top:872px">27</div>
<div class="a lnum" style="top:897px">28</div>
<div class="a lnum" style="top:922px">29</div>
<div class="a lnum" style="top:947px">30</div>
<div class="a lnum" style="top:972px">31</div>
<div class="a lnum" style="top:997px">32</div>
<div class="a lnum" style="top:1022px">33</div>
<div class="a lnum" style="top:1047px">34</div>
<div class="a lnum" style="top:1072px">35</div>
<div class="a lnum" style="top:1097px">36</div>
<div class="a lnum" style="top:1122px">37</div>
<div class="a lnum" style="top:1147px">38</div>
<div class="a lnum" style="top:1172px">39</div>
</div>
<!-- current line box -->
<div class="a" style="left:389px;top:1071px;width:764px;height:25px;border:2px solid #dadada"></div>
<!-- code -->
<div id="codeblk">
<div class="a code" style="top:222px"><span class="id">F380_Positioning_Start</span></div>
<div class="a code" style="top:247px"><span class="op">(</span><span class="id">s1_Channel</span><span class="ws">·</span><span class="op">:=</span><span class="ws">·</span><span class="ph">?ANY16?</span><span class="op">,</span></div>
<div class="a code" style="top:272px"><span class="id">s2_TableNumber</span><span class="ws">·</span><span class="op">:=</span><span class="ws">·</span><span class="ph">?ANY16?</span><span class="op">,</span></div>
<div class="a code" style="top:297px"><span class="id">s3_OutputCalculationOnly</span><span class="ws">·</span><span class="op">:=</span><span class="ws">·</span><span class="ph">?ANY16?</span><span class="op">)</span><span class="op">;</span></div>
<div class="a code" style="top:372px"><span class="id">F381_Positioning_Jog</span></div>
<div class="a code" style="top:397px"><span class="op">(</span><span class="id">s1_Channel</span><span class="ws">·</span><span class="op">:=</span><span class="ws">·</span><span class="ph">?ANY16?</span><span class="op">,</span></div>
<div class="a code" style="top:422px"><span class="id">s3_DirectionReverse</span><span class="ws">·</span><span class="op">:=</span><span class="ws">·</span><span class="ph">?ANY16?</span><span class="op">)</span><span class="op">;</span></div>
<div class="a code" style="top:497px"><span class="id">F382_Positioning_Home</span></div>
<div class="a code" style="top:522px"><span class="op">(</span><span class="id">s1_Channel</span><span class="ws">·</span><span class="op">:=</span><span class="ws">·</span><span class="ph">?ANY16?</span><span class="op">)</span><span class="op">;</span></div>
<div class="a code" style="top:597px"><span class="id">F383_Positioning_StartMultiple</span></div>
<div class="a code" style="top:622px"><span class="op">(</span><span class="id">s1_dutMultipleChannels</span><span class="ws">·</span><span class="op">:=</span><span class="ws">·</span><span class="ph">?DUT?</span><span class="op">)</span><span class="op">;</span></div>
<div class="a code" style="top:697px"><span class="id">F384_Positioning_ReadData</span></div>
<div class="a code" style="top:722px"><span class="op">(</span><span class="id">s1_Channel</span><span class="ws">·</span><span class="op">:=</span><span class="ws">·</span><span class="ph">?ANY16?</span><span class="op">,</span></div>
<div class="a code" style="top:747px"><span class="id">s1_Area</span><span class="ws">·</span><span class="op">:=</span><span class="ws">·</span><span class="ph">?ANY16?</span><span class="op">,</span></div>
<div class="a code" style="top:772px"><span class="id">s2_Offset</span><span class="ws">·</span><span class="op">:=</span><span class="ws">·</span><span class="ph">?ANY16?</span><span class="op">,</span></div>
<div class="a code" style="top:797px"><span class="id">n_Number</span><span class="ws">·</span><span class="op">:=</span><span class="ws">·</span><span class="ph">?ANY16?</span><span class="op">,</span><span class="ws">·</span></div>
<div class="a code" style="top:822px"><span class="tab"></span><span class="tab"></span><span class="tab"></span><span class="tab"></span><span class="tab"></span><span class="tab"></span><span class="ws">·</span><span class="ws">·</span><span class="id">d_Start</span><span class="ws">·</span><span class="op">=&gt;</span><span class="ws">·</span><span class="ph">?ANY16?</span><span class="op">)</span><span class="op">;</span></div>
<div class="a code" style="top:872px"><span class="id">F385_Positioning_WriteData</span></div>
<div class="a code" style="top:897px"><span class="op">(</span><span class="id">s1_Channel</span><span class="ws">·</span><span class="op">:=</span><span class="ws">·</span><span class="ph">?ANY16?</span><span class="op">,</span></div>
<div class="a code" style="top:922px"><span class="id">s2_Start</span><span class="ws">·</span><span class="op">:=</span><span class="ws">·</span><span class="ph">?ANY16?</span><span class="op">,</span></div>
<div class="a code" style="top:947px"><span class="id">n_Number</span><span class="ws">·</span><span class="op">:=</span><span class="ws">·</span><span class="ph">?ANY16?</span><span class="op">,</span></div>
<div class="a code" style="top:972px"><span class="id">s1_Area</span><span class="ws">·</span><span class="op">:=</span><span class="ws">·</span><span class="ph">?ANY16?</span><span class="op">,</span><span class="ws">·</span></div>
<div class="a code" style="top:997px"><span class="tab"></span><span class="tab"></span><span class="tab"></span><span class="tab"></span><span class="tab"></span><span class="tab"></span><span class="ws">·</span><span class="ws">·</span><span class="ws">·</span><span class="id">d_Offset</span><span class="ws">·</span><span class="op">:=</span><span class="ws">·</span><span class="ph">?ANY16?</span><span class="op">)</span><span class="op">;</span></div>
<div class="a code" style="top:1072px"><span class="cm">//</span><span class="ws">·</span><span class="cg">F386</span></div>
<div class="a code" style="top:1097px"><span class="cm">//</span><span class="ws">·</span><span class="cg">F387</span></div>
<div class="a code" style="top:1122px"><span class="cm">//</span><span class="ws">·</span><span class="cg">F388</span></div>
<div class="a code" style="top:1147px"><span class="cm">//</span><span class="ws">·</span><span class="cg">F389</span></div>
</div>

<!-- editor bottom hscroll -->
<div class="a" style="left:282px;top:1486px;width:895px;height:22px;background:#e8e8f0"></div>
<div class="a" style="left:304px;top:1492px;width:317px;height:9px;background:#cdd1dc"></div>
<svg class="a" style="left:290px;top:1491px" width="8" height="12"><path d="M7 0V11L1 5.5Z" fill="#8088a8"/></svg>
<!-- grid hscroll arrows -->
<svg class="a" style="left:290px;top:197px" width="8" height="12"><path d="M7 0V11L1 5.5Z" fill="#8088a8"/></svg>
<svg class="a" style="left:1141px;top:197px" width="8" height="12"><path d="M1 0V11L7 5.5Z" fill="#8088a8"/></svg>
<!-- vscroll arrows -->
<svg class="a" style="left:1160px;top:248px" width="12" height="8"><path d="M0.5 6.5H10.5L5.5 1Z" fill="#8088a8"/></svg>
<svg class="a" style="left:1160px;top:1472px" width="12" height="8"><path d="M0.5 0.5H10.5L5.5 6Z" fill="#8088a8"/></svg>
<svg class="a" style="left:1160px;top:163px" width="12" height="8"><path d="M0.5 6.5H10.5L5.5 1Z" fill="#c4c8d8"/></svg>
<svg class="a" style="left:1160px;top:178px" width="12" height="8"><path d="M0.5 0.5H10.5L5.5 6Z" fill="#c4c8d8"/></svg>
<!-- splitter icons -->
<svg class="a" style="left:1155px;top:139px" width="22" height="22"><rect x="1.5" y="6.5" width="19" height="7.5" fill="#f6d9cc" opacity="0.9"/><path d="M10.5 3V19" stroke="#1e1e1e" stroke-width="1.1"/><path d="M10.5 1L8 4H13Z M10.5 20.5L8 17.5H13Z" fill="#1e1e1e"/><path d="M8 5.5H13M8 16H13" stroke="#1e1e1e" stroke-width="1.1"/><rect x="2" y="7.4" width="17" height="3" fill="#1e1e1e"/><rect x="2" y="11.6" width="17" height="1.4" fill="#1e1e1e"/></svg>
<svg class="a" style="left:1155px;top:220px" width="22" height="22"><rect x="1.5" y="6.5" width="19" height="7.5" fill="#f6d9cc" opacity="0.9"/><path d="M10.5 3V19" stroke="#1e1e1e" stroke-width="1.1"/><path d="M10.5 1L8 4H13Z M10.5 20.5L8 17.5H13Z" fill="#1e1e1e"/><path d="M8 5.5H13M8 16H13" stroke="#1e1e1e" stroke-width="1.1"/><rect x="2" y="7.4" width="17" height="3" fill="#1e1e1e"/><rect x="2" y="11.6" width="17" height="1.4" fill="#1e1e1e"/></svg>
<!-- editor window top-right buttons -->
<div class="a" style="left:1141px;top:112px;width:36px;height:20px;background:#233760"></div>
<svg class="a" style="left:1144px;top:117px" width="12" height="8"><path d="M0.5 0.5H10.5L5.5 6Z" fill="#ced4e4"/></svg>
<svg class="a" style="left:1162px;top:116px" width="12" height="12"><path d="M1 1L11 11M11 1L1 11" stroke="#ced4e4" stroke-width="1.3"/></svg>
<!-- tab arrows and guides -->
<svg class="a" style="left:388px;top:821px" width="280" height="200"><g transform="translate(0,0)"><path d="M4.0 12.5H42.5M35.0 5L42.5 12.5L35.0 20" stroke="#c8c8c8" stroke-width="1.1" fill="none"/><path d="M47.8 12.5H86.3M78.8 5L86.3 12.5L78.8 20" stroke="#c8c8c8" stroke-width="1.1" fill="none"/><path d="M91.6 12.5H130.1M122.6 5L130.1 12.5L122.6 20" stroke="#c8c8c8" stroke-width="1.1" fill="none"/><path d="M135.4 12.5H173.9M166.4 5L173.9 12.5L166.4 20" stroke="#c8c8c8" stroke-width="1.1" fill="none"/><path d="M179.2 12.5H217.7M210.2 5L217.7 12.5L210.2 20" stroke="#c8c8c8" stroke-width="1.1" fill="none"/><path d="M223.0 12.5H261.5M254.0 5L261.5 12.5L254.0 20" stroke="#c8c8c8" stroke-width="1.1" fill="none"/><path d="M45.5 1V24" stroke="#8a8a8a" stroke-width="1" stroke-dasharray="1 1"/><path d="M89.5 1V24" stroke="#8a8a8a" stroke-width="1" stroke-dasharray="1 1"/><path d="M133.5 1V24" stroke="#8a8a8a" stroke-width="1" stroke-dasharray="1 1"/><path d="M177.5 1V24" stroke="#8a8a8a" stroke-width="1" stroke-dasharray="1 1"/><path d="M221.5 1V24" stroke="#8a8a8a" stroke-width="1" stroke-dasharray="1 1"/><path d="M265.5 1V24" stroke="#8a8a8a" stroke-width="1" stroke-dasharray="1 1"/></g><g transform="translate(0,175)"><path d="M4.0 12.5H42.5M35.0 5L42.5 12.5L35.0 20" stroke="#c8c8c8" stroke-width="1.1" fill="none"/><path d="M47.8 12.5H86.3M78.8 5L86.3 12.5L78.8 20" stroke="#c8c8c8" stroke-width="1.1" fill="none"/><path d="M91.6 12.5H130.1M122.6 5L130.1 12.5L122.6 20" stroke="#c8c8c8" stroke-width="1.1" fill="none"/><path d="M135.4 12.5H173.9M166.4 5L173.9 12.5L166.4 20" stroke="#c8c8c8" stroke-width="1.1" fill="none"/><path d="M179.2 12.5H217.7M210.2 5L217.7 12.5L210.2 20" stroke="#c8c8c8" stroke-width="1.1" fill="none"/><path d="M223.0 12.5H261.5M254.0 5L261.5 12.5L254.0 20" stroke="#c8c8c8" stroke-width="1.1" fill="none"/><path d="M45.5 1V24" stroke="#8a8a8a" stroke-width="1" stroke-dasharray="1 1"/><path d="M89.5 1V24" stroke="#8a8a8a" stroke-width="1" stroke-dasharray="1 1"/><path d="M133.5 1V24" stroke="#8a8a8a" stroke-width="1" stroke-dasharray="1 1"/><path d="M177.5 1V24" stroke="#8a8a8a" stroke-width="1" stroke-dasharray="1 1"/><path d="M221.5 1V24" stroke="#8a8a8a" stroke-width="1" stroke-dasharray="1 1"/><path d="M265.5 1V24" stroke="#8a8a8a" stroke-width="1" stroke-dasharray="1 1"/></g></svg>
<!-- fold marker -->
<svg class="a" style="left:360px;top:1068px" width="30" height="100">
<rect x="5.5" y="5.5" width="20" height="20" fill="#fff" stroke="#6e6e6e" stroke-width="1"/>
<path d="M8 15.5H23" stroke="#5a5a5a" stroke-width="1.2"/>
<path d="M15.5 26V89Q15.5 93.5 20 93.5H28" stroke="#6e6e6e" stroke-width="1" fill="none"/>
</svg>
<!-- zigzags -->
<svg class="a" style="left:0;top:0" width="1216" height="1521"><g fill="none" stroke="#ff0000" stroke-width="1.6"><polyline points="552.8,265.5 555.2,268.5 557.8,265.5 560.2,268.5 562.8,265.5 565.2,268.5 567.8,265.5 570.2,268.5 572.8,265.5 575.2,268.5 577.8,265.5 580.2,268.5 582.8,265.5 585.2,268.5 587.8,265.5 590.2,268.5 592.8,265.5 595.2,268.5 597.8,265.5 600.2,268.5 602.8,265.5 605.2,268.5 607.8,265.5 610.2,268.5 612.8,265.5 615.2,268.5 617.8,265.5 620.2,268.5 622.8,265.5 625.2,268.5 627.8,265.5 630.2,268.5"/><polyline points="585.6,290.5 588.1,293.5 590.6,290.5 593.1,293.5 595.6,290.5 598.1,293.5 600.6,290.5 603.1,293.5 605.6,290.5 608.1,293.5 610.6,290.5 613.1,293.5 615.6,290.5 618.1,293.5 620.6,290.5 623.1,293.5 625.6,290.5 628.1,293.5 630.6,290.5 633.1,293.5 635.6,290.5 638.1,293.5 640.6,290.5 643.1,293.5 645.6,290.5 648.1,293.5 650.6,290.5 653.1,293.5 655.6,290.5 658.1,293.5 660.6,290.5 663.1,293.5"/><polyline points="695.1,315.5 697.6,318.5 700.1,315.5 702.6,318.5 705.1,315.5 707.6,318.5 710.1,315.5 712.6,318.5 715.1,315.5 717.6,318.5 720.1,315.5 722.6,318.5 725.1,315.5 727.6,318.5 730.1,315.5 732.6,318.5 735.1,315.5 737.6,318.5 740.1,315.5 742.6,318.5 745.1,315.5 747.6,318.5 750.1,315.5 752.6,318.5 755.1,315.5 757.6,318.5 760.1,315.5 762.6,318.5 765.1,315.5 767.6,318.5 770.1,315.5 772.6,318.5"/><polyline points="552.8,415.5 555.2,418.5 557.8,415.5 560.2,418.5 562.8,415.5 565.2,418.5 567.8,415.5 570.2,418.5 572.8,415.5 575.2,418.5 577.8,415.5 580.2,418.5 582.8,415.5 585.2,418.5 587.8,415.5 590.2,418.5 592.8,415.5 595.2,418.5 597.8,415.5 600.2,418.5 602.8,415.5 605.2,418.5 607.8,415.5 610.2,418.5 612.8,415.5 615.2,418.5 617.8,415.5 620.2,418.5 622.8,415.5 625.2,418.5 627.8,415.5 630.2,418.5"/><polyline points="640.4,440.5 642.9,443.5 645.4,440.5 647.9,443.5 650.4,440.5 652.9,443.5 655.4,440.5 657.9,443.5 660.4,440.5 662.9,443.5 665.4,440.5 667.9,443.5 670.4,440.5 672.9,443.5 675.4,440.5 677.9,443.5 680.4,440.5 682.9,443.5 685.4,440.5 687.9,443.5 690.4,440.5 692.9,443.5 695.4,440.5 697.9,443.5 700.4,440.5 702.9,443.5 705.4,440.5 707.9,443.5 710.4,440.5 712.9,443.5 715.4,440.5 717.9,443.5"/><polyline points="552.8,540.5 555.2,543.5 557.8,540.5 560.2,543.5 562.8,540.5 565.2,543.5 567.8,540.5 570.2,543.5 572.8,540.5 575.2,543.5 577.8,540.5 580.2,543.5 582.8,540.5 585.2,543.5 587.8,540.5 590.2,543.5 592.8,540.5 595.2,543.5 597.8,540.5 600.2,543.5 602.8,540.5 605.2,543.5 607.8,540.5 610.2,543.5 612.8,540.5 615.2,543.5 617.8,540.5 620.2,543.5 622.8,540.5 625.2,543.5 627.8,540.5 630.2,543.5"/><polyline points="684.1,640.5 686.6,643.5 689.1,640.5 691.6,643.5 694.1,640.5 696.6,643.5 699.1,640.5 701.6,643.5 704.1,640.5 706.6,643.5 709.1,640.5 711.6,643.5 714.1,640.5 716.6,643.5 719.1,640.5 721.6,643.5 724.1,640.5 726.6,643.5 729.1,640.5 731.6,643.5 734.1,640.5 736.6,643.5 739.1,640.5"/><polyline points="552.8,740.5 555.2,743.5 557.8,740.5 560.2,743.5 562.8,740.5 565.2,743.5 567.8,740.5 570.2,743.5 572.8,740.5 575.2,743.5 577.8,740.5 580.2,743.5 582.8,740.5 585.2,743.5 587.8,740.5 590.2,743.5 592.8,740.5 595.2,743.5 597.8,740.5 600.2,743.5 602.8,740.5 605.2,743.5 607.8,740.5 610.2,743.5 612.8,740.5 615.2,743.5 617.8,740.5 620.2,743.5 622.8,740.5 625.2,743.5 627.8,740.5 630.2,743.5"/><polyline points="508.9,765.5 511.4,768.5 514.0,765.5 516.5,768.5 519.0,765.5 521.5,768.5 524.0,765.5 526.5,768.5 529.0,765.5 531.5,768.5 534.0,765.5 536.5,768.5 539.0,765.5 541.5,768.5 544.0,765.5 546.5,768.5 549.0,765.5 551.5,768.5 554.0,765.5 556.5,768.5 559.0,765.5 561.5,768.5 564.0,765.5 566.5,768.5 569.0,765.5 571.5,768.5 574.0,765.5 576.5,768.5 579.0,765.5 581.5,768.5 584.0,765.5 586.5,768.5"/><polyline points="530.9,790.5 533.4,793.5 535.9,790.5 538.4,793.5 540.9,790.5 543.4,793.5 545.9,790.5 548.4,793.5 550.9,790.5 553.4,793.5 555.9,790.5 558.4,793.5 560.9,790.5 563.4,793.5 565.9,790.5 568.4,793.5 570.9,790.5 573.4,793.5 575.9,790.5 578.4,793.5 580.9,790.5 583.4,793.5 585.9,790.5 588.4,793.5 590.9,790.5 593.4,793.5 595.9,790.5 598.4,793.5 600.9,790.5 603.4,793.5 605.9,790.5 608.4,793.5"/><polyline points="519.9,815.5 522.4,818.5 524.9,815.5 527.4,818.5 529.9,815.5 532.4,818.5 534.9,815.5 537.4,818.5 539.9,815.5 542.4,818.5 544.9,815.5 547.4,818.5 549.9,815.5 552.4,818.5 554.9,815.5 557.4,818.5 559.9,815.5 562.4,818.5 564.9,815.5 567.4,818.5 569.9,815.5 572.4,818.5 574.9,815.5 577.4,818.5 579.9,815.5 582.4,818.5 584.9,815.5 587.4,818.5 589.9,815.5 592.4,818.5 594.9,815.5 597.4,818.5"/><polyline points="793.6,840.5 796.1,843.5 798.6,840.5 801.1,843.5 803.6,840.5 806.1,843.5 808.6,840.5 811.1,843.5 813.6,840.5 816.1,843.5 818.6,840.5 821.1,843.5 823.6,840.5 826.1,843.5 828.6,840.5 831.1,843.5 833.6,840.5 836.1,843.5 838.6,840.5 841.1,843.5 843.6,840.5 846.1,843.5 848.6,840.5 851.1,843.5 853.6,840.5 856.1,843.5 858.6,840.5 861.1,843.5 863.6,840.5 866.1,843.5 868.6,840.5 871.1,843.5"/><polyline points="552.8,915.5 555.2,918.5 557.8,915.5 560.2,918.5 562.8,915.5 565.2,918.5 567.8,915.5 570.2,918.5 572.8,915.5 575.2,918.5 577.8,915.5 580.2,918.5 582.8,915.5 585.2,918.5 587.8,915.5 590.2,918.5 592.8,915.5 595.2,918.5 597.8,915.5 600.2,918.5 602.8,915.5 605.2,918.5 607.8,915.5 610.2,918.5 612.8,915.5 615.2,918.5 617.8,915.5 620.2,918.5 622.8,915.5 625.2,918.5 627.8,915.5 630.2,918.5"/><polyline points="519.9,940.5 522.4,943.5 524.9,940.5 527.4,943.5 529.9,940.5 532.4,943.5 534.9,940.5 537.4,943.5 539.9,940.5 542.4,943.5 544.9,940.5 547.4,943.5 549.9,940.5 552.4,943.5 554.9,940.5 557.4,943.5 559.9,940.5 562.4,943.5 564.9,940.5 567.4,943.5 569.9,940.5 572.4,943.5 574.9,940.5 577.4,943.5 579.9,940.5 582.4,943.5 584.9,940.5 587.4,943.5 589.9,940.5 592.4,943.5 594.9,940.5 597.4,943.5"/><polyline points="519.9,965.5 522.4,968.5 524.9,965.5 527.4,968.5 529.9,965.5 532.4,968.5 534.9,965.5 537.4,968.5 539.9,965.5 542.4,968.5 544.9,965.5 547.4,968.5 549.9,965.5 552.4,968.5 554.9,965.5 557.4,968.5 559.9,965.5 562.4,968.5 564.9,965.5 567.4,968.5 569.9,965.5 572.4,968.5 574.9,965.5 577.4,968.5 579.9,965.5 582.4,968.5 584.9,965.5 587.4,968.5 589.9,965.5 592.4,968.5 594.9,965.5 597.4,968.5"/><polyline points="508.9,990.5 511.4,993.5 514.0,990.5 516.5,993.5 519.0,990.5 521.5,993.5 524.0,990.5 526.5,993.5 529.0,990.5 531.5,993.5 534.0,990.5 536.5,993.5 539.0,990.5 541.5,993.5 544.0,990.5 546.5,993.5 549.0,990.5 551.5,993.5 554.0,990.5 556.5,993.5 559.0,990.5 561.5,993.5 564.0,990.5 566.5,993.5 569.0,990.5 571.5,993.5 574.0,990.5 576.5,993.5 579.0,990.5 581.5,993.5 584.0,990.5 586.5,993.5"/><polyline points="815.5,1015.5 818.0,1018.5 820.5,1015.5 823.0,1018.5 825.5,1015.5 828.0,1018.5 830.5,1015.5 833.0,1018.5 835.5,1015.5 838.0,1018.5 840.5,1015.5 843.0,1018.5 845.5,1015.5 848.0,1018.5 850.5,1015.5 853.0,1018.5 855.5,1015.5 858.0,1018.5 860.5,1015.5 863.0,1018.5 865.5,1015.5 868.0,1018.5 870.5,1015.5 873.0,1018.5 875.5,1015.5 878.0,1018.5 880.5,1015.5 883.0,1018.5 885.5,1015.5 888.0,1018.5 890.5,1015.5 893.0,1018.5"/></g></svg>
<!-- red boxes -->
<div class="a" style="left:368px;top:208px;width:444px;height:125px;border:4px solid #ff1a1a;border-radius:5px"></div>
<div class="a" style="left:348px;top:1053px;width:152px;height:133px;border:4px solid #ff1a1a;border-radius:5px"></div>

<!-- right sidebar -->
<div class="a" style="left:1176px;top:138px;width:1px;height:1370px;background:#b8c4da"></div>
<div class="a" style="left:1209px;top:112px;width:7px;height:71px;background:#3d5a8e"></div>
<div class="a" style="left:1209px;top:206px;width:7px;height:71px;background:#3d5a8e"></div>
<div class="a" style="left:1209px;top:299px;width:7px;height:72px;background:#3d5a8e"></div>
<div class="a vt" style="left:1205px;top:122px">变量列表</div>
<div class="a vt" style="left:1205px;top:216px">指令列表</div>
<div class="a vt" style="left:1205px;top:311px">模板列表</div>

<!-- network widget -->
<div class="a" style="left:984px;top:1485px;width:232px;height:35px;border:2px solid #4aa8f0;border-right:none;background:rgba(225,238,255,0.8)"></div>
<svg class="a" style="left:991px;top:1493px" width="15" height="17"><path d="M7.5 3V15.5M2.5 7.5L7.5 2.5L12.5 7.5" stroke="#ff8c2a" stroke-width="3" fill="none" stroke-linecap="round"/></svg>
<div class="a ui" style="left:1014px;top:1494px;font-size:18px;color:#1a5cc8;letter-spacing:-0.25px">0.00 KB/s</div>
<svg class="a" style="left:1107px;top:1493px" width="15" height="17"><path d="M7.5 1.5V14M2.5 9.5L7.5 14.5L12.5 9.5" stroke="#22cc33" stroke-width="3" fill="none" stroke-linecap="round"/></svg>
<div class="a ui" style="left:1129px;top:1494px;font-size:18px;color:#1a5cc8;letter-spacing:-0.25px">0.00 KB/s</div>
<!-- editor tab content -->
<svg class="a" style="left:284px;top:116px" width="21" height="15"><rect x="0.8" y="0.8" width="7" height="7" fill="#3aa8f0" stroke="#222" stroke-width="1.5"/><rect x="12.8" y="0.8" width="7" height="6" fill="#6ed66e" stroke="#222" stroke-width="1.5"/><rect x="12.8" y="6.8" width="7" height="7" fill="#6ed66e" stroke="#222" stroke-width="1.5"/><path d="M8 4H12M10 4V10H12" stroke="#222" stroke-width="1.5" fill="none"/></svg>
<div class="a ui" style="left:307px;top:117px;color:#000;font-size:16px">Program_1</div>
<svg class="a" style="left:392px;top:127px" width="8" height="8"><rect x="1" y="0" width="2" height="2" fill="#222"/><rect x="5" y="0" width="2" height="2" fill="#222"/><rect x="1" y="4" width="2" height="2" fill="#222"/><rect x="5" y="4" width="2" height="2" fill="#222"/></svg>
<svg class="a" style="left:406px;top:117px" width="13" height="13"><path d="M1.5 1.5L11.5 11.5M11.5 1.5L1.5 11.5" stroke="#333" stroke-width="1.3"/></svg>

</body></html>
